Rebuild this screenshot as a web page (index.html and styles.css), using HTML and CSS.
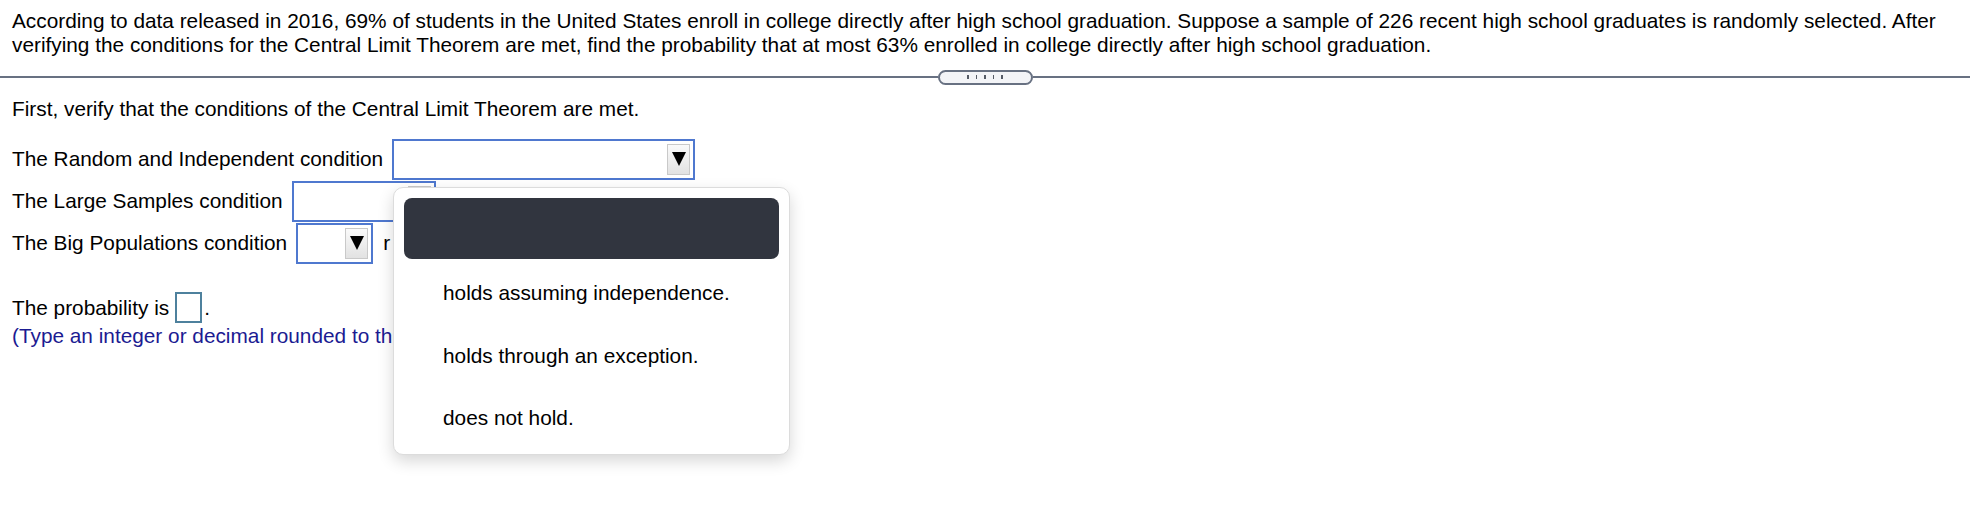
FILE: index.html
```html
<!DOCTYPE html>
<html lang="en">
<head>
<meta charset="utf-8">
<title>Central Limit Theorem</title>
<link rel="stylesheet" href="styles.css">
</head>
<body>
<div class="page">
  <p class="question">According to data released in 2016, 69% of students in the United States enroll in college directly after high school graduation. Suppose a sample of 226 recent high school graduates is randomly selected. After verifying the conditions for the Central Limit Theorem are met, find the probability that at most 63% enrolled in college directly after high school graduation.</p>

  <div class="divider">
    <span class="rule"></span>
    <span class="handle"><span class="ticks"><i></i><i></i><i></i><i></i><i></i></span></span>
    <span class="rule"></span>
  </div>

  <p class="intro">First, verify that the conditions of the Central Limit Theorem are met.</p>

  <div class="cond">
    <div class="row">
      <span class="label">The Random and Independent condition</span>
      <span class="select wide"><span class="arrow"><svg viewBox="0 0 14 14" width="14" height="14"><polygon points="0,0 14,0 7,14" fill="#000"/></svg></span></span>
    </div>
    <div class="row">
      <span class="label">The Large Samples condition</span>
      <span class="select mid"><span class="arrow"><svg viewBox="0 0 14 14" width="14" height="14"><polygon points="0,0 14,0 7,14" fill="#000"/></svg></span></span>
    </div>
    <div class="row">
      <span class="label">The Big Populations condition</span>
      <span class="select small"><span class="arrow"><svg viewBox="0 0 14 14" width="14" height="14"><polygon points="0,0 14,0 7,14" fill="#000"/></svg></span></span>
      <span class="label tail">r</span>
    </div>
  </div>

  <p class="prob">The probability is <span class="answer"></span>.</p>
  <p class="hint">(Type an integer or decimal rounded to th</p>

  <div class="menu">
    <div class="menu-head"></div>
    <div class="option">holds assuming independence.</div>
    <div class="option">holds through an exception.</div>
    <div class="option">does not hold.</div>
  </div>
</div>
</body>
</html>
```

FILE: styles.css
```css
html, body {
  margin: 0;
  padding: 0;
  background: #ffffff;
}
body {
  font-family: "Liberation Sans", Arial, sans-serif;
  font-size: 20.8px;
  color: #000000;
  width: 1970px;
  height: 506px;
  overflow: hidden;
}
.page {
  position: relative;
  height: 506px;
}
p {
  margin: 0;
}
.question {
  padding: 9px 10px 0 12px;
  line-height: 24px;
}
.divider {
  display: flex;
  align-items: center;
  height: 16px;
  margin-top: 12px;
}
.rule {
  flex: 1;
  height: 2px;
  background: #687182;
}
.handle {
  width: 91px;
  height: 11px;
  border: 2px solid #687182;
  border-radius: 8px;
  background: #f3f4f7;
  display: flex;
  align-items: center;
  justify-content: center;
}
.ticks {
  display: flex;
  gap: 7px;
}
.ticks i {
  display: block;
  width: 1.5px;
  height: 4px;
  background: #555b66;
}
.intro {
  padding-left: 12px;
  margin-top: 12px;
  line-height: 24px;
}
.cond {
  margin-top: 17px;
  padding-left: 12px;
}
.row {
  display: flex;
  align-items: center;
  height: 42px;
}
.label {
  line-height: 24px;
  margin-right: 9px;
}
.select {
  box-sizing: border-box;
  height: 41px;
  border: 2px solid #4f78cf;
  background: #fff;
  display: flex;
  align-items: center;
  justify-content: flex-end;
  padding-right: 3px;
  margin-right: 10px;
}
.wide { width: 303px; }
.mid { width: 144px; }
.small { width: 77px; }
.arrow {
  box-sizing: border-box;
  width: 23px;
  height: 31px;
  border: 1px solid #c9c9c9;
  background: linear-gradient(#fafafa, #e2e2e2);
  display: flex;
  align-items: center;
  justify-content: center;
}
.arrow svg {
  display: block;
}
.prob {
  margin-top: 28px;
  padding-left: 12px;
  display: flex;
  align-items: center;
  line-height: 24px;
}
.answer {
  box-sizing: border-box;
  width: 27px;
  height: 31px;
  border: 2px solid #4e819d;
  margin: 0 2px 0 6px;
}
.hint {
  padding-left: 12px;
  color: #1b1b92;
  line-height: 24px;
  margin-top: 1px;
}
.menu {
  position: absolute;
  left: 393px;
  top: 187px;
  width: 397px;
  height: 268px;
  box-sizing: border-box;
  background: #fff;
  border: 1px solid #dcdcdc;
  border-radius: 10px;
  box-shadow: 0 6px 16px rgba(0, 0, 0, 0.16);
  padding: 10px 10px 0 10px;
}
.menu-head {
  height: 61px;
  background: #31353f;
  border-radius: 8px;
}
.option {
  height: 62.5px;
  line-height: 62.5px;
  padding-left: 39px;
  white-space: nowrap;
}
.menu-head + .option {
  margin-top: 3px;
}
```
